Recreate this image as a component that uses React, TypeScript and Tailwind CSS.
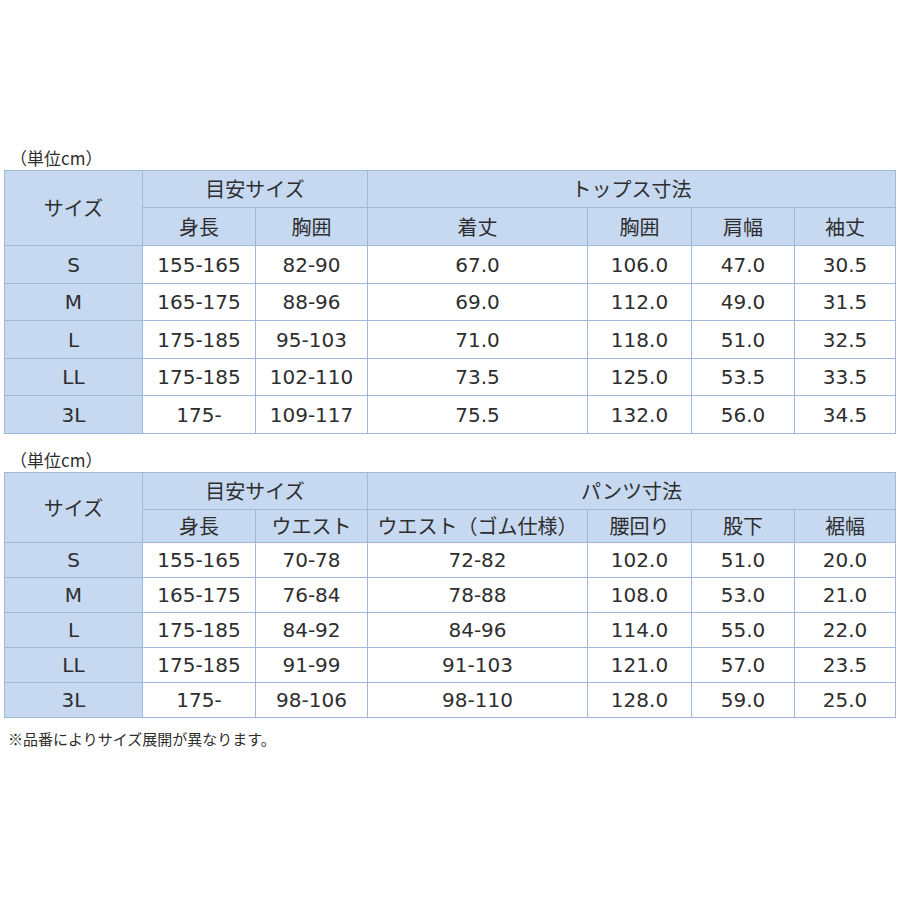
import React from "react";

type Table = {
  group: string;
  sub: [string, string];
  cols: string[];
  rows: string[][];
};

const tops: Table = {
  group: "トップス寸法",
  sub: ["身長", "胸囲"],
  cols: ["着丈", "胸囲", "肩幅", "袖丈"],
  rows: [
    ["S", "155-165", "82-90", "67.0", "106.0", "47.0", "30.5"],
    ["M", "165-175", "88-96", "69.0", "112.0", "49.0", "31.5"],
    ["L", "175-185", "95-103", "71.0", "118.0", "51.0", "32.5"],
    ["LL", "175-185", "102-110", "73.5", "125.0", "53.5", "33.5"],
    ["3L", "175-", "109-117", "75.5", "132.0", "56.0", "34.5"],
  ],
};

const pants: Table = {
  group: "パンツ寸法",
  sub: ["身長", "ウエスト"],
  cols: ["ウエスト（ゴム仕様）", "腰回り", "股下", "裾幅"],
  rows: [
    ["S", "155-165", "70-78", "72-82", "102.0", "51.0", "20.0"],
    ["M", "165-175", "76-84", "78-88", "108.0", "53.0", "21.0"],
    ["L", "175-185", "84-92", "84-96", "114.0", "55.0", "22.0"],
    ["LL", "175-185", "91-99", "91-103", "121.0", "57.0", "23.5"],
    ["3L", "175-", "98-106", "98-110", "128.0", "59.0", "25.0"],
  ],
};

const hdr = "bg-[#c6d9f1] flex items-center justify-center";
const hdrJp = "bg-[#c6d9f1] flex items-center justify-center font-['Noto_Sans_CJK_JP',sans-serif]";
const cell = "bg-white flex items-center justify-center";

function SizeTable({ t, rowsClass }: { t: Table; rowsClass: string }) {
  return (
    <div
      className={`grid grid-cols-[137px_112px_111px_219px_103px_102px_100px] ${rowsClass} gap-px p-px bg-[#9fb9da] w-[892px] text-[20px] text-[#2e2e2e] font-['DejaVu_Sans','Noto_Sans_CJK_JP',sans-serif]`}
    >
      <div className={`${hdrJp} row-span-2`}>サイズ</div>
      <div className={`${hdrJp} col-span-2`}>目安サイズ</div>
      <div className={`${hdrJp} col-span-4`}>{t.group}</div>
      {t.sub.map((s, i) => (
        <div key={"s" + i} className={hdrJp}>{s}</div>
      ))}
      {t.cols.map((s, i) => (
        <div key={"c" + i} className={hdrJp}>{s}</div>
      ))}
      {t.rows.map((r, ri) =>
        r.map((v, ci) => (
          <div key={ri + "-" + ci} className={ci === 0 ? hdr : cell}>
            {v}
          </div>
        ))
      )}
    </div>
  );
}

export default function App() {
  return (
    <div className="w-[900px] h-[900px] bg-white pt-[146px] pl-[4px] font-['Noto_Sans_CJK_JP',sans-serif] text-[#2e2e2e]">
      <div className="text-[17px] h-[24px] leading-[24px] pl-[6px]">（単位cm）</div>
      <SizeTable t={tops} rowsClass="grid-rows-[36px_37px_37px_36px_37px_36px_37px]" />
      <div className="text-[17px] h-[38px] leading-[24px] pt-[14px] pl-[6px]">（単位cm）</div>
      <SizeTable t={pants} rowsClass="grid-rows-[36px_32px_34px_34px_34px_34px_34px]" />
      <div className="text-[15px] pt-[9px] pl-[4px] leading-[24px]">※品番によりサイズ展開が異なります。</div>
    </div>
  );
}
